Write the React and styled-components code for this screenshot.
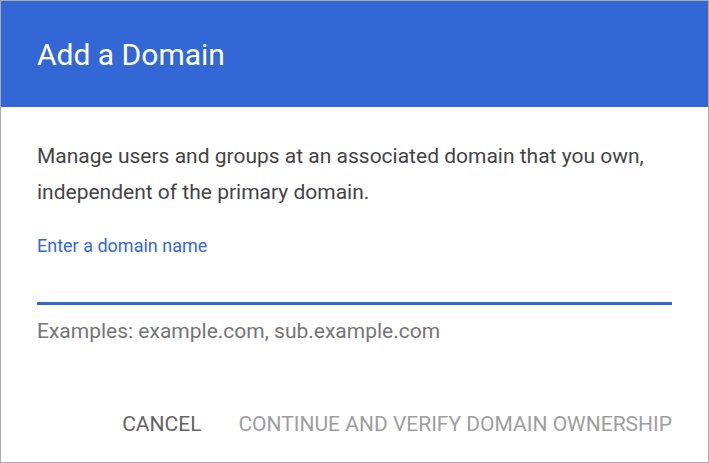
import React from 'react';
import styled, { createGlobalStyle } from 'styled-components';

const GlobalStyle = createGlobalStyle`
  html, body {
    margin: 0;
    padding: 0;
    background: #fff;
  }
  body {
    font-family: Roboto, "Liberation Sans", Arial, sans-serif;
  }
`;

const Dialog = styled.div`
  box-sizing: border-box;
  width: 709px;
  height: 463px;
  border: 1px solid #ababab;
  background: #fff;
  display: flex;
  flex-direction: column;
`;

const Header = styled.div`
  height: 106px;
  flex-shrink: 0;
  background: #3367d6;
  color: #fff;
  display: flex;
  align-items: center;
  padding: 0 36px;
  font-size: 30px;
  font-weight: 400;
`;

const Body = styled.div`
  padding: 31px 36px 0 36px;
  display: flex;
  flex-direction: column;
`;

const Description = styled.p`
  margin: 0;
  font-size: 21px;
  line-height: 36px;
  color: #444;
`;

const Label = styled.label`
  margin-top: 24px;
  font-size: 18px;
  line-height: 24px;
  color: #3367d6;
`;

const Input = styled.input`
  box-sizing: border-box;
  height: 47px;
  border: none;
  border-bottom: 3px solid #3367d6;
  outline: none;
  padding: 0;
  font-size: 21px;
  font-family: inherit;
  width: 100%;
`;

const Helper = styled.div`
  margin-top: 14px;
  font-size: 21px;
  line-height: 24px;
  color: #757575;
`;

const Actions = styled.div`
  margin-top: auto;
  display: flex;
  justify-content: flex-end;
  gap: 37px;
  padding: 0 36px 26px 36px;
`;

const Button = styled.button`
  border: none;
  background: none;
  padding: 0;
  font-family: inherit;
  font-size: 21px;
  line-height: 24px;
  text-transform: uppercase;
  color: ${p => (p.disabled ? '#9e9e9e' : '#646464')};
  cursor: ${p => (p.disabled ? 'default' : 'pointer')};
`;

export default function App() {
  return (
    <>
      <GlobalStyle />
      <Dialog>
        <Header>Add a Domain</Header>
        <Body>
          <Description>
            Manage users and groups at an associated domain that you own,
            <br />
            independent of the primary domain.
          </Description>
          <Label>Enter a domain name</Label>
          <Input />
          <Helper>Examples: example.com, sub.example.com</Helper>
        </Body>
        <Actions>
          <Button>Cancel</Button>
          <Button disabled>Continue and verify domain ownership</Button>
        </Actions>
      </Dialog>
    </>
  );
}
